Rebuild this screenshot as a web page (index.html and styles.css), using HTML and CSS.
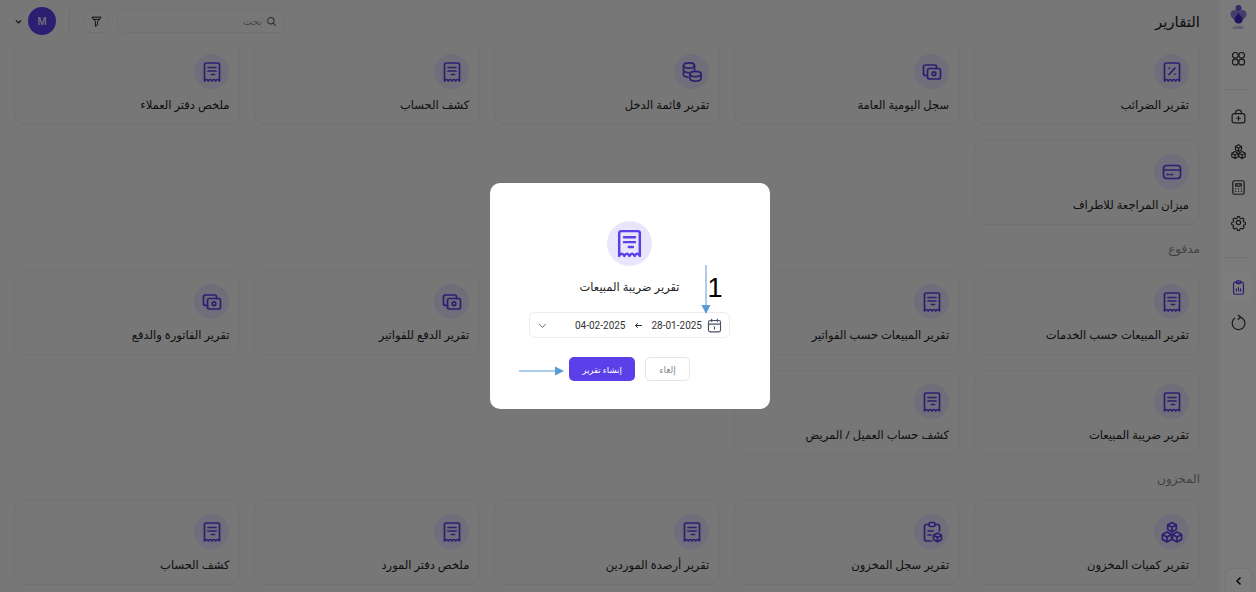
FILE: index.html
```html
<!DOCTYPE html>
<html lang="ar" dir="rtl">
<head>
    <meta charset="UTF-8">
    <meta name="viewport" content="width=device-width, initial-scale=1.0">
    <title>التقارير</title>
    <link rel="stylesheet" href="styles.css">
</head>
<body>

    <!-- shared icons -->
    <svg class="sprite" aria-hidden="true">
        <symbol id="i-receipt" viewBox="0 0 24 24">
            <path d="M4.5 21V4.5A1.5 1.5 0 0 1 6 3h12a1.5 1.5 0 0 1 1.5 1.5V21c-1.2-2-2.55-2-3.75 0-1.2-2-2.55-2-3.75 0-1.2-2-2.55-2-3.75 0-1.2-2-2.55-2-3.75 0z"/>
            <path d="M8 7.5h8M8 11h8M11.5 14.5h3"/>
        </symbol>
        <symbol id="i-percent" viewBox="0 0 24 24">
            <path d="M4.5 21V4.5A1.5 1.5 0 0 1 6 3h12a1.5 1.5 0 0 1 1.5 1.5V21c-1.2-2-2.55-2-3.75 0-1.2-2-2.55-2-3.75 0-1.2-2-2.55-2-3.75 0-1.2-2-2.55-2-3.75 0z"/>
            <path d="M9 14.5l6-6.5M9.2 8.2h.1M14.8 14.2h.1"/>
        </symbol>
        <symbol id="i-card" viewBox="0 0 24 24">
            <rect x="3.5" y="5.5" width="17" height="13" rx="3"/>
            <path d="M3.5 10h17M7 14.5h1.5M10.5 14.5h2"/>
        </symbol>
        <symbol id="i-cash" viewBox="0 0 24 24">
            <rect x="7.5" y="8.5" width="13" height="10.5" rx="2"/>
            <circle cx="14" cy="13.75" r="1.8"/>
            <path d="M7.5 15.5h-2a2 2 0 0 1-2-2V7a2 2 0 0 1 2-2h9a2 2 0 0 1 2 2v1.5"/>
        </symbol>
        <symbol id="i-coins" viewBox="0 0 24 24">
            <ellipse cx="9" cy="5.5" rx="5.5" ry="2.6"/>
            <ellipse cx="15.5" cy="14" rx="5.5" ry="2.6"/>
            <path d="M3.5 5.5v9c0 1.3 1.8 2.4 4.5 2.6M14.5 5.5v4.500M3.5 10c0 1.300 1.800 2.400 5 2.600M10 14v4.500c0 1.500 2.500 2.600 5.500 2.600s5.500-1.100 5.500-2.600V14"/>
        </symbol>
        <symbol id="i-boxes" viewBox="0 0 24 24">
            <path d="M12 2.500l4.300 2.400v4.700L12 12 7.700 9.600V4.900zM7.700 4.900L12 7.300l4.300-2.400M12 7.300V12"/>
            <path d="M7 12l4.500 2.500v5L7 22l-4.500-2.500v-5zM2.500 14.500L7 17l4.500-2.500M7 17v5"/>
            <path d="M17 12l4.500 2.500v5L17 22l-4.500-2.500v-5zM12.500 14.500L17 17l4.500-2.500M17 17v5"/>
        </symbol>
        <symbol id="i-clipbox" viewBox="0 0 24 24">
            <path d="M9 4.500H6.500a2 2 0 0 0-2 2V19a2 2 0 0 0 2 2h5M15 4.500h2.500a2 2 0 0 1 2 2V11"/>
            <rect x="9" y="2.500" width="6" height="4" rx="1.500"/>
            <path d="M8 11h5M8 15h3"/>
            <path d="M17.500 13l4 2.200v4.400l-4 2.200-4-2.200v-4.400zM13.500 15.200l4 2.200 4-2.200M17.500 17.400v4.400"/>
        </symbol>
    </svg>

    <div class="app">
        <aside class="sidebar">
            <div class="logo">
                <svg class="logo-mark" viewBox="0 0 17 19" aria-hidden="true">
                    <circle cx="8.5" cy="3" r="3" fill="#6a4fd8"/>
                    <path d="M8.5 6.500C6 4 .5 4.500.5 9c0 4 4.500 6 8 9.500 3.500-3.500 8-5.500 8-9.500 0-4.500-5.500-5-8-2.500z" fill="#8f7be0"/>
                    <path d="M8.5 8c1 2 4 4 4 6.500a4 4 0 0 1-8 0C4.500 12 7.500 10 8.500 8z" fill="#3f22c4"/>
                </svg>
                <span class="logo-text">CARE</span>
            </div>
            <a class="side-link side-link-first">
                <svg class="side-icon" viewBox="0 0 24 24"><circle cx="7.500" cy="7.500" r="4"/><circle cx="16.500" cy="7.500" r="4"/><rect x="3.500" y="13" width="8" height="8" rx="3.500"/><rect x="12.500" y="13" width="8" height="8" rx="3.500"/></svg>
            </a>
            <div class="side-rule"></div>
            <a class="side-link">
                <svg class="side-icon" viewBox="0 0 24 24"><rect x="3" y="8" width="18" height="13" rx="3"/><path d="M8 8V6a3 3 0 0 1 3-3h2a3 3 0 0 1 3 3v2M12 12v5M9.500 14.500h5"/></svg>
            </a>
            <a class="side-link">
                <svg class="side-icon"><use href="#i-boxes"/></svg>
            </a>
            <a class="side-link">
                <svg class="side-icon" viewBox="0 0 24 24"><rect x="4" y="2.500" width="16" height="19" rx="2.500"/><path d="M8 7h8v3H8zM8 14h.1M12 14h.1M16 14h.1M8 17.500h.1M12 17.500h.1M16 17.500h.1"/></svg>
            </a>
            <a class="side-link">
                <svg class="side-icon" viewBox="0 0 24 24"><circle cx="12" cy="12" r="3"/><path d="M10.300 2.800h3.400l.6 2.600 1.800.8 2.300-1.400 2.400 2.400-1.400 2.300.8 1.800 2.600.6v3.400l-2.600.6-.8 1.800 1.400 2.300-2.400 2.400-2.300-1.400-1.800.8-.6 2.600h-3.400l-.6-2.600-1.800-.8-2.300 1.400-2.400-2.400 1.400-2.300-.8-1.800-2.600-.6v-3.400l2.600-.6.8-1.800-1.400-2.300 2.400-2.400 2.300 1.400 1.800-.8z" transform="translate(1.200 1.200) scale(.9)"/></svg>
            </a>
            <div class="side-rule side-rule-low"></div>
            <a class="side-link side-link-active">
                <svg class="side-icon" viewBox="0 0 24 24"><rect x="5" y="4.500" width="14" height="17" rx="2.500"/><rect x="9" y="2.500" width="6" height="4" rx="1.200"/><path d="M9 17v-3M12 17v-5M15 17v-3"/></svg>
            </a>
            <a class="side-link">
                <svg class="side-icon" viewBox="0 0 24 24"><path d="M14.500 4.400A9 9 0 1 1 6.500 6"/><path d="M11.500 1.500l3.500 3-3.500 3"/></svg>
            </a>
            <button class="collapse">
                <svg viewBox="0 0 24 24"><path d="M15 5l-7 7 7 7"/></svg>
            </button>
        </aside>

        <main class="main">
            <header class="topbar">
                <h1 class="page-title">التقارير</h1>
                <div class="tools">
                    <label class="search">
                        <svg viewBox="0 0 24 24"><circle cx="10.500" cy="10.500" r="7"/><path d="M16 16l5 5"/></svg>
                        <span>بحث</span>
                    </label>
                    <button class="filter">
                        <svg viewBox="0 0 24 24"><path d="M3.500 4h17l-6.500 8v6.500L10 21v-9zM6 8h12"/></svg>
                    </button>
                    <div class="tools-rule"></div>
                    <div class="avatar">M</div>
                    <svg class="caret" viewBox="0 0 24 24"><path d="M5 9l7 7 7-7"/></svg>
                </div>
            </header>

            <div class="content">
                <section class="report-grid report-grid-first">
                    <a class="card"><span class="badge"><svg><use href="#i-percent"/></svg></span><span class="card-title">تقرير الضرائب</span></a>
                    <a class="card"><span class="badge"><svg><use href="#i-cash"/></svg></span><span class="card-title">سجل اليومية العامة</span></a>
                    <a class="card"><span class="badge"><svg><use href="#i-coins"/></svg></span><span class="card-title">تقرير قائمة الدخل</span></a>
                    <a class="card"><span class="badge"><svg><use href="#i-receipt"/></svg></span><span class="card-title">كشف الحساب</span></a>
                    <a class="card"><span class="badge"><svg><use href="#i-receipt"/></svg></span><span class="card-title">ملخص دفتر العملاء</span></a>
                    <a class="card"><span class="badge"><svg><use href="#i-card"/></svg></span><span class="card-title">ميزان المراجعة للاطراف</span></a>
                </section>

                <h2 class="group-title">مدفوع</h2>
                <section class="report-grid">
                    <a class="card"><span class="badge"><svg><use href="#i-receipt"/></svg></span><span class="card-title">تقرير المبيعات حسب الخدمات</span></a>
                    <a class="card"><span class="badge"><svg><use href="#i-receipt"/></svg></span><span class="card-title">تقرير المبيعات حسب الفواتير</span></a>
                    <div class="card-slot"></div>
                    <a class="card"><span class="badge"><svg><use href="#i-cash"/></svg></span><span class="card-title">تقرير الدفع للفواتير</span></a>
                    <a class="card"><span class="badge"><svg><use href="#i-cash"/></svg></span><span class="card-title">تقرير الفاتورة والدفع</span></a>
                    <a class="card"><span class="badge"><svg><use href="#i-receipt"/></svg></span><span class="card-title">تقرير ضريبة المبيعات</span></a>
                    <a class="card"><span class="badge"><svg><use href="#i-receipt"/></svg></span><span class="card-title">كشف حساب العميل / المريض</span></a>
                </section>

                <h2 class="group-title">المخزون</h2>
                <section class="report-grid">
                    <a class="card"><span class="badge"><svg><use href="#i-boxes"/></svg></span><span class="card-title">تقرير كميات المخزون</span></a>
                    <a class="card"><span class="badge"><svg><use href="#i-clipbox"/></svg></span><span class="card-title">تقرير سجل المخزون</span></a>
                    <a class="card"><span class="badge"><svg><use href="#i-receipt"/></svg></span><span class="card-title">تقرير أرصدة الموردين</span></a>
                    <a class="card"><span class="badge"><svg><use href="#i-receipt"/></svg></span><span class="card-title">ملخص دفتر المورد</span></a>
                    <a class="card"><span class="badge"><svg><use href="#i-receipt"/></svg></span><span class="card-title">كشف الحساب</span></a>
                </section>
            </div>
        </main>
    </div>

    <div class="overlay">
        <div class="modal">
            <span class="modal-badge"><svg><use href="#i-receipt"/></svg></span>
            <h3 class="modal-title">تقرير ضريبة المبيعات</h3>
            <div class="date-range">
                <svg class="date-icon" viewBox="0 0 24 24"><rect x="3.500" y="5" width="17" height="16" rx="2.500"/><path d="M3.500 10h17M8 2.500V7M16 2.500V7M12 13.500v4M11 14.500l1-1"/></svg>
                <span class="date">28-01-2025</span>
                <svg class="date-arrow" viewBox="0 0 24 24"><path d="M21 12H4M10 6l-6 6 6 6"/></svg>
                <span class="date">04-02-2025</span>
                <svg class="date-caret" viewBox="0 0 24 24"><path d="M5 9l7 7 7-7"/></svg>
            </div>
            <div class="modal-actions">
                <button class="btn-cancel">إلغاء</button>
                <button class="btn-create">إنشاء تقرير</button>
            </div>

            <!-- note marks drawn on top of the dialog -->
            <svg class="mark-down" viewBox="0 0 12 50"><path d="M6 0v41"/><polygon points="1.500,40 10.500,40 6,49"/></svg>
            <span class="mark-number">1</span>
            <svg class="mark-right" viewBox="0 0 46 10"><path d="M0 5h36"/><polygon points="36,.5 45,5 36,9.500"/></svg>
        </div>
    </div>

</body>
</html>
```

FILE: styles.css
```css
* {
    box-sizing: border-box;
}
html, body {
    height: 100%;
}
body {
    margin: 0;
    overflow: hidden;
    font-family: "Noto Sans", "DejaVu Sans", sans-serif;
    background-color: #f2f2f2;
    color: #222;
}
.sprite {
    position: absolute;
    width: 0;
    height: 0;
}
.app {
    display: flex;
    height: 100vh;
}

/* sidebar */
.sidebar {
    width: 36px;
    flex-shrink: 0;
    display: flex;
    flex-direction: column;
    align-items: center;
    background-color: #fafafa;
    position: relative;
}
.logo {
    display: flex;
    flex-direction: column;
    align-items: center;
    padding-top: 5px;
    height: 32px;
}
.logo-mark {
    width: 17px;
    height: 19px;
}
.logo-text {
    margin-top: 1px;
    font-family: "Inter", sans-serif;
    font-size: 4px;
    color: #6a4fd8;
    line-height: 5px;
}
.side-link {
    width: 30px;
    height: 35.5px;
    display: flex;
    align-items: center;
    justify-content: center;
    border-radius: 6px;
    flex-shrink: 0;
}
.side-link-first {
    margin-top: 9px;
}
.side-icon {
    width: 17px;
    height: 17px;
    fill: none;
    stroke: #333;
    stroke-width: 1.7;
    stroke-linecap: round;
    stroke-linejoin: round;
}
.side-rule {
    width: 26px;
    height: 1px;
    background-color: #e6e6e6;
    margin: 12px 0 9px;
}
.side-rule-low {
    margin: 16px 0 15px;
}
.side-link-active {
    height: 29px;
    margin-bottom: 3px;
    background-color: #fff;
}
.side-link-active .side-icon {
    stroke: #5b3fe8;
}
.collapse {
    position: absolute;
    bottom: 0;
    left: 5px;
    width: 27px;
    height: 24px;
    padding: 0;
    background-color: #fff;
    border: 1px solid #eee;
    border-bottom: none;
    border-radius: 6px 6px 0 0;
    display: flex;
    align-items: center;
    justify-content: center;
}
.collapse svg {
    width: 12px;
    height: 12px;
    fill: none;
    stroke: #111;
    stroke-width: 3;
}

/* top bar */
.main {
    flex: 1;
    min-width: 0;
    display: flex;
    flex-direction: column;
}
.topbar {
    height: 42px;
    flex-shrink: 0;
    display: flex;
    align-items: center;
    justify-content: space-between;
    padding: 0 20px 0 14px;
    position: relative;
    z-index: 1;
    background-color: #f2f2f2;
}
.page-title {
    margin: 0;
    font-size: 15px;
    font-weight: 500;
    color: #222;
}
.tools {
    display: flex;
    align-items: center;
}
.search {
    width: 168px;
    height: 24px;
    display: flex;
    align-items: center;
    gap: 4px;
    padding: 0 7px;
    border: 1px solid #e8e8e8;
    border-radius: 7px;
    font-size: 10px;
    color: #999;
}
.search svg {
    width: 11px;
    height: 11px;
    fill: none;
    stroke: #555;
    stroke-width: 2.2;
}
.filter {
    width: 24px;
    height: 24px;
    margin-right: 9px;
    padding: 0;
    display: flex;
    align-items: center;
    justify-content: center;
    background: none;
    border: 1px solid #e8e8e8;
    border-radius: 7px;
}
.filter svg {
    width: 13px;
    height: 13px;
    fill: none;
    stroke: #222;
    stroke-width: 1.8;
    stroke-linejoin: round;
}
.tools-rule {
    width: 1px;
    height: 22px;
    margin: 0 14px 0 13px;
    background-color: #e3e3e3;
}
.avatar {
    width: 28px;
    height: 28px;
    border-radius: 50%;
    display: flex;
    align-items: center;
    justify-content: center;
    background-color: #5b3fe8;
    color: #eee;
    font-family: "Inter", sans-serif;
    font-size: 10px;
    font-weight: 500;
}
.caret {
    width: 9px;
    height: 9px;
    margin-right: 5px;
    fill: none;
    stroke: #222;
    stroke-width: 3;
}

/* report cards */
.content {
    flex: 1;
    overflow: hidden;
    padding: 0 20px 0 14px;
}
.report-grid {
    display: grid;
    grid-template-columns: repeat(5, 1fr);
    grid-auto-rows: 85px;
    gap: 15px 13.5px;
}
.report-grid-first {
    margin-top: -2px;
}
.card {
    display: flex;
    flex-direction: column;
    align-items: flex-start;
    padding: 13px 10px 0;
    background-color: #f2f2f2;
    border: 1px solid #e8e8e8;
    border-radius: 11px;
}
.badge {
    width: 35px;
    height: 35px;
    flex-shrink: 0;
    display: flex;
    align-items: center;
    justify-content: center;
    border-radius: 50%;
    background-color: #e4e0f8;
}
.badge svg {
    width: 24px;
    height: 24px;
    fill: none;
    stroke: #5b3fe8;
    stroke-width: 1.7;
    stroke-linecap: round;
    stroke-linejoin: round;
}
.card-title {
    margin-top: 6px;
    font-size: 11.5px;
    line-height: 20px;
    color: #222;
    white-space: nowrap;
}
.group-title {
    margin: 0;
    height: 45px;
    padding-top: 15px;
    font-size: 12px;
    line-height: 18px;
    font-weight: 400;
    color: #888;
}

/* dialog */
.overlay {
    position: fixed;
    inset: 0;
    z-index: 5;
    display: flex;
    align-items: center;
    justify-content: center;
    padding-left: 3px;
    background-color: rgba(0, 0, 0, 0.51);
}
.modal {
    position: relative;
    width: 280px;
    height: 226px;
    padding-top: 38px;
    display: flex;
    flex-direction: column;
    align-items: center;
    background-color: #fff;
    border-radius: 10px;
}
.modal-badge {
    width: 45px;
    height: 45px;
    display: flex;
    align-items: center;
    justify-content: center;
    border-radius: 50%;
    background-color: #e9e5fc;
}
.modal-badge svg {
    width: 33px;
    height: 33px;
    fill: none;
    stroke: #5b3fe8;
    stroke-width: 1.8;
    stroke-linecap: round;
    stroke-linejoin: round;
}
.modal-title {
    margin: 11px 0 15px;
    font-size: 11.5px;
    line-height: 20px;
    font-weight: 400;
    color: #222;
}
.date-range {
    width: 201px;
    height: 26px;
    display: flex;
    align-items: center;
    padding: 0 6px 0 7px;
    border: 1px solid #ececec;
    border-radius: 6px;
}
.date-icon {
    width: 17px;
    height: 17px;
    margin-left: 4px;
    fill: none;
    stroke: #4a5068;
    stroke-width: 1.6;
}
.date {
    direction: ltr;
    font-family: "Roboto", sans-serif;
    font-size: 10px;
    color: #333;
}
.date-arrow {
    width: 9px;
    height: 9px;
    margin: 0 8.5px;
    fill: none;
    stroke: #222;
    stroke-width: 2.6;
}
.date-caret {
    width: 11px;
    height: 11px;
    margin-right: auto;
    fill: none;
    stroke: #555;
    stroke-width: 2;
}
.modal-actions {
    display: flex;
    gap: 10px;
    margin-top: 19px;
}
.modal-actions button {
    height: 24px;
    padding: 0;
    font-family: inherit;
    font-size: 9px;
    border-radius: 5px;
}
.btn-cancel {
    width: 45px;
    background-color: #fff;
    border: 1px solid #e6e6e6;
    color: #888;
}
.modal-actions .btn-create {
    width: 66px;
    background-color: #5b3fe8;
    border: none;
    color: #fff;
    font-size: 8.5px;
}

/* note marks */
.mark-down {
    position: absolute;
    left: 210px;
    top: 82px;
    width: 12px;
    height: 50px;
}
.mark-right {
    position: absolute;
    left: 29px;
    top: 183px;
    width: 46px;
    height: 10px;
}
.mark-down path,
.mark-right path {
    stroke: #5b9bd5;
    stroke-width: 1;
    fill: none;
}
.mark-down polygon,
.mark-right polygon {
    fill: #5b9bd5;
}
.mark-number {
    position: absolute;
    left: 218px;
    top: 89px;
    font-family: "Liberation Sans", sans-serif;
    font-size: 27px;
    line-height: 32px;
    color: #000;
}
```
